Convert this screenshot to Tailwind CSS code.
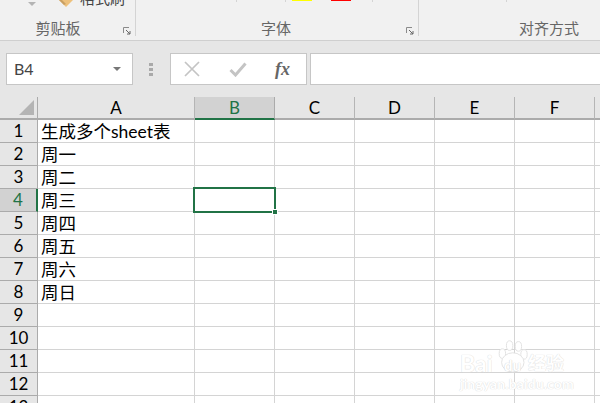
<!DOCTYPE html>
<html lang="zh">
<head>
    <meta charset="UTF-8">
    <title>Excel</title>
    <script src="https://cdn.jsdelivr.net/npm/@tailwindcss/browser@4"></script>
</head>
<body class="bg-white">
<div class="relative w-[600px] h-[403px] overflow-hidden bg-white font-['Lato','Noto_Sans_CJK_SC',sans-serif]">

    <!-- ribbon -->
    <div class="relative h-[41px] bg-[#f1f1f1] border-b border-[#cfcfcf] text-[15px] text-[#666]">
        <div class="flex h-[36px]">
            <div class="w-[136px] border-r border-[#d4d4d4] flex items-end justify-center pr-[19px] h-[36px]"><span class="leading-[20px] mb-[-2px]">剪贴板</span></div>
            <div class="w-[283px] border-r border-[#d4d4d4] flex items-end justify-center pr-[2px]"><span class="leading-[20px] mb-[-2px]">字体</span></div>
            <div class="flex-1 flex items-end justify-end pr-[21px]"><span class="leading-[20px] mb-[-2px]">对齐方式</span></div>
        </div>
        <!-- cut off controls on the top edge -->
        <div class="absolute left-[28px] top-[2px] w-0 h-0 border-x-[4px] border-x-transparent border-t-[4px] border-t-[#b4b4b4]"></div>
        <svg class="absolute left-[58px] top-0" width="16" height="8" viewBox="0 0 16 8"><path d="M1 0 L8 7 L15 0Z" fill="#eec17c"/><path d="M1 0 L4 0 L8 4 L6 5Z" fill="#c9a063"/></svg>
        <span class="absolute left-[80px] top-[-12px] text-[15px] leading-[20px] text-[#444]">格式刷</span>
        <div class="absolute left-[236px] top-0 w-px h-[2px] bg-[#d4d4d4]"></div>
        <div class="absolute left-[285px] top-0 w-px h-[2px] bg-[#d4d4d4]"></div>
        <div class="absolute left-[292px] top-0 w-[20px] h-[1px] bg-[#ffff00]"></div>
        <div class="absolute left-[331px] top-0 w-[20px] h-[1px] bg-[#ff0000]"></div>
        <div class="absolute left-[372px] top-0 w-px h-[2px] bg-[#d4d4d4]"></div>
        <div class="absolute left-[506px] top-0 w-px h-[2px] bg-[#d4d4d4]"></div>
        <svg class="absolute left-[123px] top-[27px]" width="8" height="8" viewBox="0 0 8 8"><path d="M0.5 6V0.5H6" fill="none" stroke="#8a8a8a"/><path d="M3 3L7 7M7 4V7H4" fill="none" stroke="#666"/></svg>
        <svg class="absolute left-[406px] top-[27px]" width="8" height="8" viewBox="0 0 8 8"><path d="M0.5 6V0.5H6" fill="none" stroke="#8a8a8a"/><path d="M3 3L7 7M7 4V7H4" fill="none" stroke="#666"/></svg>
    </div>

    <!-- formula bar -->
    <div class="h-[56px] bg-[#e6e6e6] flex items-start pt-[12px] pl-[6px]">
        <div class="w-[127px] h-[32px] bg-white border border-[#c6c6c6] flex items-center justify-between pl-[7px] pr-[11px] text-[16px] text-[#444]">
            <span>B4</span>
            <div class="w-0 h-0 border-x-[4px] border-x-transparent border-t-[4px] border-t-[#777]"></div>
        </div>
        <div class="w-[37px] h-[32px] flex flex-col items-center justify-center gap-[2px] pr-[1px]">
            <div class="w-[4px] h-[3px] bg-[#a9a9a9]"></div>
            <div class="w-[4px] h-[3px] bg-[#a9a9a9]"></div>
            <div class="w-[4px] h-[3px] bg-[#a9a9a9]"></div>
        </div>
        <div class="w-[137px] h-[32px] bg-white border border-[#c6c6c6] flex items-center">
            <svg class="ml-[13px]" width="16" height="16" viewBox="0 0 16 16"><path d="M1 1L15 15M15 1L1 15" stroke="#c4c4c4" stroke-width="1.7" fill="none"/></svg>
            <svg class="ml-[29px]" width="18" height="15" viewBox="0 0 18 15"><path d="M1.5 8L6.5 13L16.5 1.5" stroke="#c4c4c4" stroke-width="3" fill="none"/></svg>
            <span class="ml-[28px] font-['Liberation_Serif',serif] italic font-bold text-[18px] text-[#666] leading-none">fx</span>
        </div>
        <div class="ml-[3px] flex-1 h-[32px] bg-white border border-[#c6c6c6] border-r-0"></div>
    </div>

    <!-- sheet -->
    <div id="sheet" class="grid grid-cols-[38px_157px_80px_80px_80px_80px_80px_10px] grid-rows-[23px_repeat(13,23px)] text-black">
        <div class="relative bg-[#e6e6e6] border-r border-b-2 border-[#ababab]">
            <div class="absolute right-[3px] bottom-[3px] w-0 h-0 border-l-[15px] border-l-transparent border-b-[15px] border-b-[#b4b4b4]"></div>
        </div>
    </div>

    <!-- selected cell -->
    <div class="absolute left-[193px] top-[187px] w-[83px] h-[26px] border-2 border-[#217346]"></div>
    <div class="absolute left-[272px] top-[209px] w-[6px] h-[6px] bg-[#217346] border border-white"></div>

    <!-- watermark -->
    <div class="absolute left-[458px] top-[336px] w-[142px] h-[67px] text-white">
        <svg class="absolute left-[38px] top-[2px]" width="32" height="36" viewBox="0 0 40 42">
            <g fill="white" stroke="#e2e2e2" stroke-width="1.2">
                <ellipse cx="8" cy="18" rx="4" ry="6"/>
                <ellipse cx="17" cy="8" rx="4" ry="6"/>
                <ellipse cx="28" cy="9" rx="4" ry="6"/>
                <ellipse cx="35" cy="19" rx="4" ry="6"/>
                <ellipse cx="21" cy="29" rx="14" ry="12"/>
            </g>
        </svg>
        <span class="absolute left-[2px] top-[14px] text-[23px] leading-[26px] font-bold [text-shadow:0_0_1px_#dcdcdc,0_0_1px_#dcdcdc]">Bai</span>
        <span class="absolute left-[46px] top-[19px] text-[15px] leading-[20px] font-bold [text-shadow:0_0_1px_#d4d4d4,0_0_1px_#d4d4d4]">du</span>
        <span class="absolute left-[70px] top-[15px] text-[18px] leading-[24px] font-bold [text-shadow:0_0_1px_#dcdcdc,0_0_1px_#dcdcdc]">经验</span>
        <span class="absolute left-[2px] top-[40px] text-[14px] leading-[16px] font-bold tracking-[0.1px] [text-shadow:0_0_1px_#dcdcdc,0_0_1px_#dcdcdc]">jingyan.baidu.com</span>
    </div>
</div>

<script>
    var sheet = document.getElementById('sheet');
    var cols = ['A', 'B', 'C', 'D', 'E', 'F', ''];
    var texts = ['生成多个sheet表', '周一', '周二', '周三', '周四', '周五', '周六', '周日'];
    var html = '';
    cols.forEach(function (c) {
        if (c == 'B') {
            html += '<div class="bg-[#d2d2d2] border-r border-[#ababab] border-b-2 border-b-[#217346] flex items-center justify-center text-[17px] text-[#217346]">B</div>';
        } else {
            html += '<div class="bg-[#e6e6e6] border-r border-b-2 border-r-[#b5b5b5] border-b-[#ababab] flex items-center justify-center text-[17px]">' + c + '</div>';
        }
    });
    for (var r = 1; r <= 13; r++) {
        if (r == 4) {
            html += '<div class="bg-[#d2d2d2] border-r-2 border-r-[#217346] border-b border-b-[#ababab] flex items-center justify-center text-[17px] text-[#217346]">4</div>';
        } else {
            html += '<div class="bg-[#e6e6e6] border-r border-b border-[#ababab] flex items-center justify-center text-[17px]">' + r + '</div>';
        }
        cols.forEach(function (c, i) {
            var t = (i == 0 && texts[r - 1]) ? texts[r - 1] : '';
            html += '<div class="bg-white border-r border-b border-[#d4d4d4] pl-[3px] text-[17.5px] leading-[24px] whitespace-nowrap">' + t + '</div>';
        });
    }
    sheet.insertAdjacentHTML('beforeend', html);
</script>
</body>
</html>
